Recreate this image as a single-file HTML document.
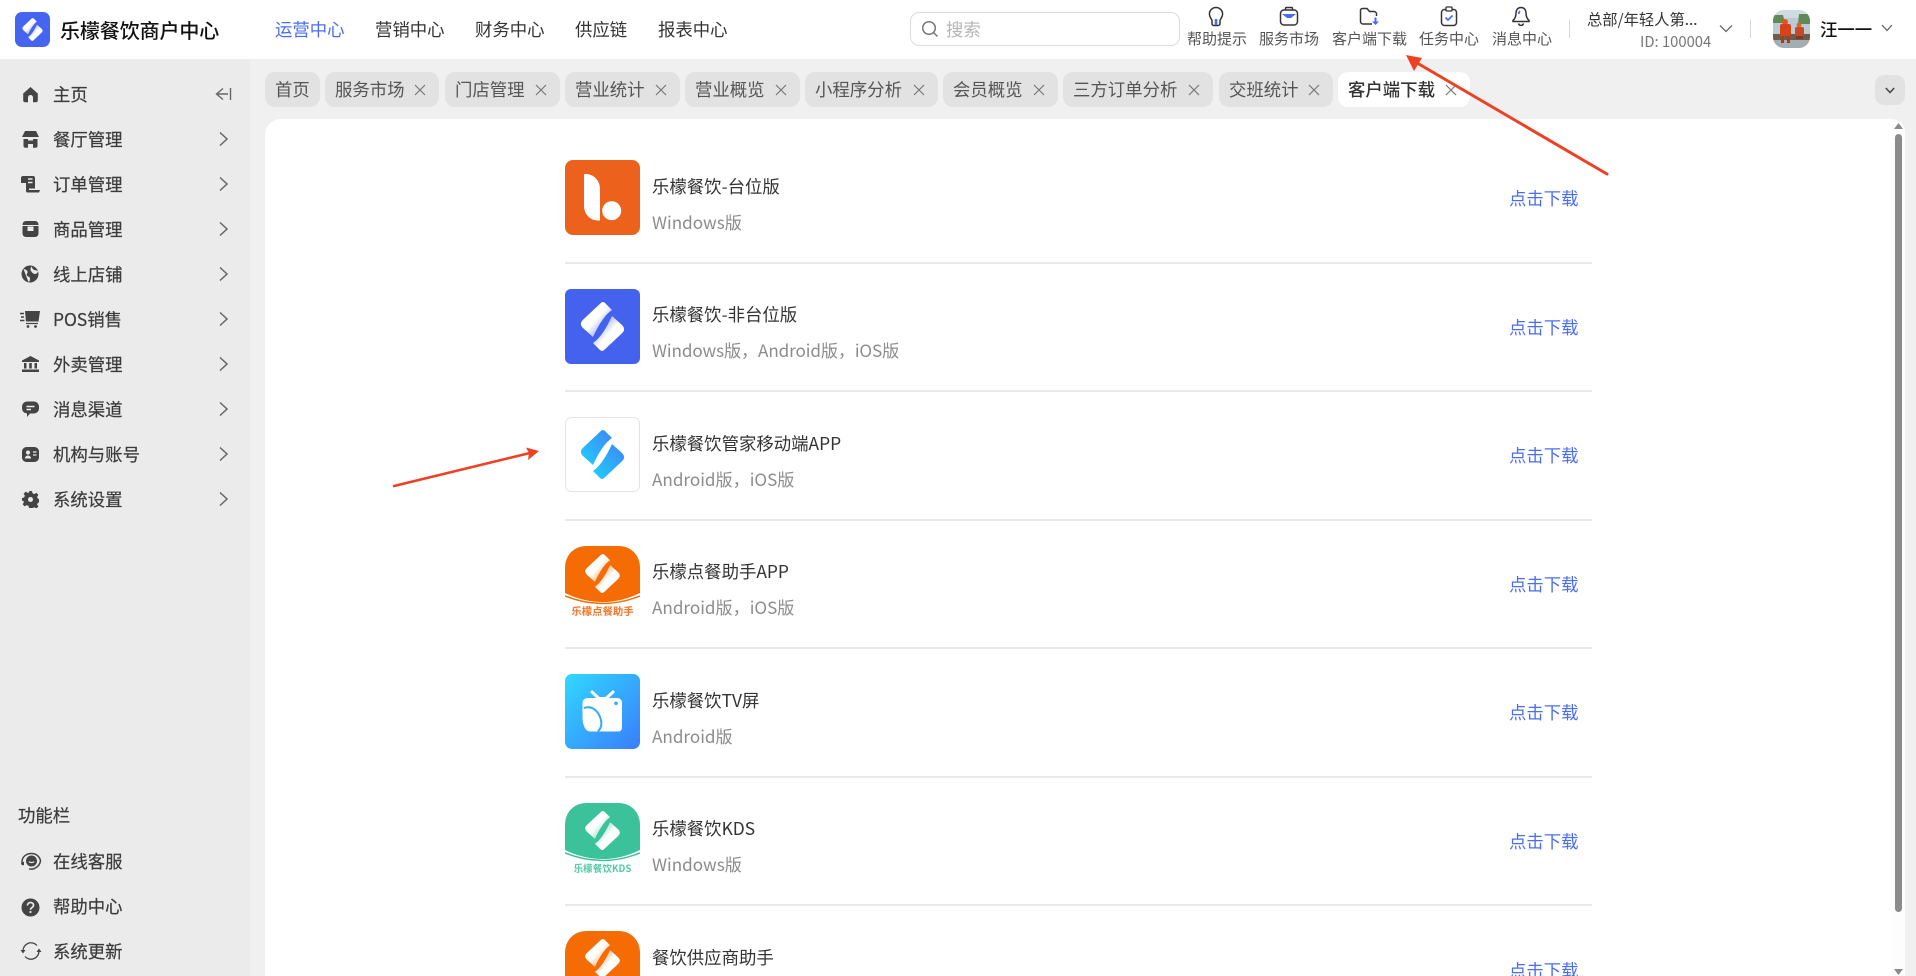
<!DOCTYPE html>
<html lang="zh-CN"><head><meta charset="utf-8"><title>乐檬餐饮商户中心</title>
<style>
html,body{margin:0;padding:0;width:1916px;height:976px;overflow:hidden;background:#f0f0f1}
body{position:relative;font-family:"Noto Sans CJK SC","Liberation Sans",sans-serif;color:#333;font-size:17.4px}
.t{position:absolute;white-space:nowrap;line-height:24px}
.a{position:absolute;display:block}
#hd{position:absolute;left:0;top:0;width:1916px;height:59px;background:#fff}
#sb{position:absolute;left:0;top:59px;width:250px;height:917px;background:#ebebeb}
#pn{position:absolute;left:265px;top:119px;width:1640px;height:900px;background:#fff;border-radius:16px 16px 0 0}
.nav{color:#333}
.tl{color:#555;font-size:15px;text-align:center}
.tab{position:absolute;top:72px;height:35px;background:#e2e2e2;border-radius:10px;line-height:35px;color:#555;padding-left:10px;box-sizing:border-box;white-space:nowrap}
.tab i{position:absolute;top:12px;right:13px;width:12px;height:12px;line-height:0;display:block}
.tab i svg{display:block}
.m{color:#3b3b3b;-webkit-text-stroke:.2px #3b3b3b}
.ti{color:#333}
.su{color:#8c8c8c;font-size:17.1px}
.dl{color:#4b6ef0}
.ln{position:absolute;left:565px;width:1027px;height:2px;background:#e9e9e9}
.cv{position:absolute;left:219px;width:9px;height:16px}
</style></head><body>
<svg width="0" height="0" style="position:absolute"><defs>
<linearGradient id="w1" x1="0.25" y1="0.25" x2="0.85" y2="0.85"><stop offset="0.4" stop-color="#fff"/><stop offset="1" stop-color="#fff" stop-opacity=".3"/></linearGradient>
<linearGradient id="w2" x1="0.75" y1="0.75" x2="0.15" y2="0.15"><stop offset="0.4" stop-color="#fff"/><stop offset="1" stop-color="#fff" stop-opacity=".3"/></linearGradient>
<linearGradient id="b1" x1="0" y1="1" x2="1" y2="0"><stop offset="0" stop-color="#1fd0ff"/><stop offset="1" stop-color="#3d86f5"/></linearGradient>
<linearGradient id="tv" x1="0" y1="0" x2="1" y2="1"><stop offset="0" stop-color="#30d8ff"/><stop offset="1" stop-color="#3a7dfb"/></linearGradient>
<symbol id="lg" viewBox="0 0 75 75" overflow="visible"><path fill="url(#w1)" d="M35.600 14.200Q37.700 12 40 14L47 21C41 25 35 33 28 48L18 39C15.200 36 15.200 33.500 18 30.700Z"/><path fill="url(#w2)" d="M39.400 60.800Q37.300 63 35 61L28 54C34 50 40 42 47 27L57 36C59.800 39 59.800 41.500 57 44.300Z"/></symbol>
<symbol id="lb" viewBox="0 0 75 75"><path fill="url(#b1)" d="M35.600 14.200Q37.700 12 40 14L47 21C41 25 35 33 28 48L18 39C15.200 36 15.200 33.500 18 30.700Z"/><path fill="url(#b1)" d="M39.400 60.800Q37.300 63 35 61L28 54C34 50 40 42 47 27L57 36C59.800 39 59.800 41.500 57 44.300Z"/></symbol>
<symbol id="cv" viewBox="0 0 9 16"><path d="M1 1.500L8 8 1 14.500" fill="none" stroke="#666" stroke-width="1.500"/></symbol>
<symbol id="x" viewBox="0 0 12 12"><path d="M1 1L11 11M11 1L1 11" fill="none" stroke="#777" stroke-width="1.200"/></symbol>
</defs></svg>

<div id="hd"></div>
<svg class="a" style="left:15px;top:12px" width="35" height="35"><rect width="35" height="35" rx="7" fill="#4565f0"/><use href="#lg" width="35" height="35"/></svg>
<div class="t" style="left:60px;top:18px;font-size:20px;font-weight:500;color:#111;letter-spacing:-.1px">乐檬餐饮商户中心</div>
<div class="t" style="left:275px;top:18px;color:#4a6cf0">运营中心</div>
<div class="t nav" style="left:375px;top:18px">营销中心</div>
<div class="t nav" style="left:475px;top:18px">财务中心</div>
<div class="t nav" style="left:575px;top:18px">供应链</div>
<div class="t nav" style="left:658px;top:18px">报表中心</div>

<div class="a" style="left:910px;top:12px;width:270px;height:34px;border:1px solid #dcdcdc;border-radius:9px;box-sizing:border-box"></div>
<svg class="a" style="left:921px;top:20px" width="18" height="18" viewBox="0 0 18 18"><circle cx="8" cy="8" r="6.300" fill="none" stroke="#777" stroke-width="1.500"/><path d="M12.500 12.500L16.500 16.500" stroke="#777" stroke-width="1.500"/></svg>
<div class="t" style="left:946px;top:18px;color:#b5b5b5">搜索</div>

<!-- top icons -->
<svg class="a" style="left:1206px;top:6px" width="20" height="22" viewBox="0 0 20 22"><path d="M10 1.500a6.600 6.600 0 0 0-6.600 6.600c0 3 2 4.300 2.600 6.400v3.200c0 1 .8 1.800 1.800 1.800h4.400c1 0 1.800-.8 1.800-1.800v-3.200c.6-2.100 2.600-3.400 2.600-6.400A6.600 6.600 0 0 0 10 1.500z" fill="none" stroke="#333" stroke-width="1.500"/><path d="M8.700 13h2.600v6H8.700z" fill="#4a6cf0"/></svg>
<svg class="a" style="left:1279px;top:6px" width="20" height="20" viewBox="0 0 20 20"><rect x="1.500" y="4" width="17" height="15" rx="3.500" fill="none" stroke="#333" stroke-width="1.500"/><path d="M6.500 4V2.500c0-.6.4-1 1-1h5c.6 0 1 .4 1 1V4" fill="none" stroke="#333" stroke-width="1.500"/><path d="M3 8h14l-5 4H8z" fill="#4a6cf0"/></svg>
<svg class="a" style="left:1359px;top:7px" width="22" height="19" viewBox="0 0 22 19"><path d="M13 17H4a2.500 2.500 0 0 1-2.500-2.500v-11A2 2 0 0 1 3.500 1.500H8l2.500 3H15a2.500 2.500 0 0 1 2.500 2.500V9" fill="none" stroke="#333" stroke-width="1.500"/><path d="M15.500 10.500h2v4h2.500l-3.500 3.500-3.500-3.500h2.500z" fill="#4a6cf0"/></svg>
<svg class="a" style="left:1440px;top:6px" width="18" height="21" viewBox="0 0 18 21"><rect x="1.500" y="3.500" width="15" height="16" rx="3" fill="none" stroke="#333" stroke-width="1.500"/><rect x="6" y="1" width="6" height="4" rx="1" fill="#fff" stroke="#333" stroke-width="1.300"/><path d="M5.500 11.500l2.500 2.500 4.500-4.500" fill="none" stroke="#4a6cf0" stroke-width="1.700"/></svg>
<svg class="a" style="left:1511px;top:6px" width="20" height="21" viewBox="0 0 20 21"><path d="M10 1.500c-3.300 0-5 2.600-5 5.500 0 3.700-1 5.800-3 7.500v1h16v-1c-2-1.700-3-3.800-3-7.500 0-2.900-1.700-5.500-5-5.500z" fill="none" stroke="#333" stroke-width="1.500"/><path d="M7.500 17.500a2.600 2.600 0 0 0 5 0" fill="none" stroke="#333" stroke-width="1.500"/><path d="M9 5c-.8.700-1.200 1.700-1.200 3" fill="none" stroke="#4a6cf0" stroke-width="1.700"/></svg>
<div class="t tl" style="left:1187px;top:27px">帮助提示</div>
<div class="t tl" style="left:1259px;top:27px">服务市场</div>
<div class="t tl" style="left:1332px;top:27px">客户端下载</div>
<div class="t tl" style="left:1419px;top:27px">任务中心</div>
<div class="t tl" style="left:1492px;top:27px">消息中心</div>

<div class="a" style="left:1569px;top:20px;width:1px;height:18px;background:#d8d8d8"></div>
<div class="t" style="left:1587px;top:7px;font-size:15.300px;color:#333">总部/年轻人第...</div>
<div class="t" style="left:1640px;top:30px;font-size:14.800px;color:#777">ID: 100004</div>
<svg class="a" style="left:1719px;top:24px" width="14" height="9" viewBox="0 0 14 9"><path d="M1 1.500L7 7.500 13 1.500" fill="none" stroke="#666" stroke-width="1.300"/></svg>
<div class="a" style="left:1750px;top:20px;width:1px;height:18px;background:#d8d8d8"></div>
<svg class="a" style="left:1773px;top:10px" width="37" height="38" viewBox="0 0 37 38">
<defs><clipPath id="av"><rect width="37" height="38" rx="11"/></clipPath></defs>
<g clip-path="url(#av)"><rect width="37" height="38" fill="#b9ccd6"/><rect y="0" width="37" height="8" fill="#cfdbe2"/><path d="M0 5h10l2 8H0zM26 4h11v10H25z" fill="#5f8a55"/><rect x="0" y="24" width="37" height="6" fill="#6c5d48"/><rect x="0" y="30" width="37" height="8" fill="#a2adb4"/>
<circle cx="12" cy="12" r="3" fill="#e2531d"/><rect x="7" y="14" width="11" height="12" rx="2" fill="#d8421a"/><rect x="8" y="26" width="3" height="7" fill="#b93315"/><rect x="14" y="26" width="3" height="7" fill="#b93315"/>
<circle cx="26" cy="15" r="2.500" fill="#d56a2e"/><rect x="22" y="17" width="9" height="9" rx="2" fill="#c9482a"/><rect x="23" y="26" width="7" height="3" fill="#7d3a2a"/></g></svg>
<div class="t" style="left:1820px;top:18px;font-weight:500;color:#111;font-size:17.400px">汪一一</div>
<svg class="a" style="left:1881px;top:24px" width="12" height="8" viewBox="0 0 12 8"><path d="M1 1l5 5.500L11 1" fill="none" stroke="#666" stroke-width="1.300"/></svg>

<!-- sidebar -->
<div id="sb"></div>
<svg class="a" style="left:22px;top:86px" width="17" height="17" viewBox="0 0 17 17"><path d="M8.500 1L15.800 7.500V14.500c0 1-.8 1.800-1.800 1.800H11V11.500a2.500 2.500 0 0 0-5 0v4.800H3c-1 0-1.800-.8-1.800-1.800V7.500z" fill="#444"/></svg>
<div class="t m" style="left:53px;top:83px">主页</div>
<svg class="a" style="left:215px;top:87px" width="17" height="14" viewBox="0 0 17 14"><path d="M8 1.500L1.500 7 8 12.500M1.500 7H13M15.500 1v12" fill="none" stroke="#666" stroke-width="1.400"/></svg>

<svg class="a" style="left:22px;top:131px" width="17" height="17" viewBox="0 0 17 17"><path d="M3 0h11l3 6H0z" fill="#444"/><path d="M1.500 8h14v7c0 1-.8 1.800-1.800 1.800H3.300c-1 0-1.800-.8-1.800-1.800z" fill="#444"/><path d="M6 6.500v3h5v-3M6 13h5v4H6z" fill="#ebebeb"/></svg>
<div class="t m" style="left:53px;top:128px">餐厅管理</div>
<svg class="a" style="left:20px;top:176px" width="20" height="17" viewBox="0 0 20 17"><path d="M3 0h10c1.200 0 2 .8 2 2v10.500H9V15c0 1-.8 1.500-1.500 1.500S6 16 6 15V7H1V2c0-1.200.8-2 2-2z" fill="#444"/><path d="M8 3h4.500M8 6.500h4.500" stroke="#ebebeb" stroke-width="1.500"/><path d="M9 14h11l-1 2.500H8z" fill="#444"/></svg>
<div class="t m" style="left:53px;top:173px">订单管理</div>
<svg class="a" style="left:22px;top:221px" width="17" height="16" viewBox="0 0 17 16"><rect x="0.500" y="0" width="16" height="16" rx="3.500" fill="#444"/><rect x="5.500" y="5.500" width="6" height="4.500" fill="#ebebeb"/><path d="M0 4.500h17" stroke="#ebebeb" stroke-width="1"/></svg>
<div class="t m" style="left:53px;top:218px">商品管理</div>
<svg class="a" style="left:21px;top:265px" width="18" height="18" viewBox="0 0 18 18"><circle cx="9" cy="9" r="8.500" fill="#444"/><path d="M2.500 4c2 .5 3.500 1 4 2.500S5 9 6 10.500s3 1 3 3-.5 3-1.500 3.500M11 1.500c0 2 1 3 2.500 3.500s3 .5 3.500 1c0 1.500-1.500 3-3 3S11 7.500 10 6 9.500 2.500 11 1.500z" fill="#ebebeb"/></svg>
<div class="t m" style="left:53px;top:263px">线上店铺</div>
<svg class="a" style="left:20px;top:310px" width="20" height="18" viewBox="0 0 20 18"><path d="M5 1h15l-1.500 10.500H6z" fill="#444"/><path d="M0 3.500h4M1 7h3M0 10.500h4.500" stroke="#444" stroke-width="1.500"/><path d="M6 13.500h12" stroke="#444" stroke-width="1.200"/><circle cx="8" cy="16.500" r="1.400" fill="#444"/><circle cx="15.500" cy="16.500" r="1.400" fill="#444"/></svg>
<div class="t m" style="left:53px;top:308px">POS销售</div>
<svg class="a" style="left:22px;top:356px" width="17" height="16" viewBox="0 0 17 16"><path d="M8.500 0L17 4.500V6H0V4.500z" fill="#444"/><path d="M2 7h2.500v5.500H2zM7.200 7h2.600v5.500H7.200zM12.500 7H15v5.500h-2.500z" fill="#444"/><rect x="0" y="13.500" width="17" height="2.500" fill="#444"/></svg>
<div class="t m" style="left:53px;top:353px">外卖管理</div>
<svg class="a" style="left:22px;top:401px" width="17" height="17" viewBox="0 0 17 17"><path d="M5 0.500h7a5 5 0 0 1 5 5v2a5 5 0 0 1-5 5H8L5 16v-3.600a5 5 0 0 1-5-4.900v-2a5 5 0 0 1 5-5z" fill="#444"/><path d="M4.500 5.500h8M4.500 8.500h4.500" stroke="#ebebeb" stroke-width="1.400"/></svg>
<div class="t m" style="left:53px;top:398px">消息渠道</div>
<svg class="a" style="left:22px;top:447px" width="17" height="15" viewBox="0 0 17 15"><rect width="17" height="15" rx="4.500" fill="#444"/><circle cx="6" cy="5.500" r="2" fill="#ebebeb"/><path d="M2.800 11.500c.4-2 1.700-3 3.200-3s2.800 1 3.200 3z" fill="#ebebeb"/><path d="M11 5h3.500M11 8h3.500" stroke="#ebebeb" stroke-width="1.300"/></svg>
<div class="t m" style="left:53px;top:443px">机构与账号</div>
<svg class="a" style="left:22px;top:491px" width="17" height="17" viewBox="0 0 17 17"><path d="M7 0h3l.5 2.300 1.800.8 2-1.300 2.100 2.100-1.300 2 .8 1.800 2.100.5v3l-2.100.5-.8 1.800 1.300 2-2.100 2.100-2-1.300-1.800.8L10 17H7l-.5-2.100-1.800-.8-2 1.300-2.100-2.100 1.300-2-.8-1.800L0 10V7l2.100-.5.800-1.800-1.300-2L3.700.6l2 1.300 1.800-.8z" fill="#444"/><circle cx="8.500" cy="8.500" r="2.500" fill="#ebebeb"/></svg>
<div class="t m" style="left:53px;top:488px">系统设置</div>

<svg class="cv" style="top:131px"><use href="#cv"/></svg>
<svg class="cv" style="top:176px"><use href="#cv"/></svg>
<svg class="cv" style="top:221px"><use href="#cv"/></svg>
<svg class="cv" style="top:266px"><use href="#cv"/></svg>
<svg class="cv" style="top:311px"><use href="#cv"/></svg>
<svg class="cv" style="top:356px"><use href="#cv"/></svg>
<svg class="cv" style="top:401px"><use href="#cv"/></svg>
<svg class="cv" style="top:446px"><use href="#cv"/></svg>
<svg class="cv" style="top:491px"><use href="#cv"/></svg>

<div class="t m" style="left:18px;top:804px">功能栏</div>
<svg class="a" style="left:20px;top:851px" width="22" height="22" viewBox="0 0 22 22"><circle cx="11.500" cy="10" r="5.500" fill="#444"/><path d="M9 10.500c.7 1.300 4.300 1.300 5 0" stroke="#ebebeb" stroke-width="1.200" fill="none"/><path d="M2 11c0-5 4-8.500 9.500-8.500s8.500 4 9 7.500c-.5 3.500-3 6-6 7.500-2 .8-4 .8-5.500.3" fill="none" stroke="#444" stroke-width="1.500"/><path d="M1 12a2 2 0 0 1 3-1v3a2 2 0 0 1-3-2z" fill="#444"/></svg>
<div class="t m" style="left:53px;top:850px">在线客服</div>
<svg class="a" style="left:21px;top:898px" width="19" height="19" viewBox="0 0 19 19"><circle cx="9.500" cy="9.500" r="9" fill="#444"/><path d="M6.500 7.500c0-1.800 1.300-3 3-3s3 1 3 2.700c0 2.300-3 2.300-3 4.500" fill="none" stroke="#ebebeb" stroke-width="1.700"/><circle cx="9.500" cy="14" r="1.100" fill="#ebebeb"/></svg>
<div class="t m" style="left:53px;top:895px">帮助中心</div>
<svg class="a" style="left:20px;top:941px" width="22" height="20" viewBox="0 0 22 20"><path d="M3 10a8 8 0 0 1 14-5.500M19 10a8 8 0 0 1-14 5.500" fill="none" stroke="#444" stroke-width="1.300"/><path d="M0.500 9h5L3 12.500zM21.500 11h-5L19 7.500z" fill="#444"/></svg>
<div class="t m" style="left:53px;top:940px">系统更新</div>

<!-- tabs -->
<div class="tab" style="left:265px;width:55px">首页</div>
<div class="tab" style="left:325px;width:114px">服务市场<i><svg width="12" height="12"><use href="#x"/></svg></i></div>
<div class="tab" style="left:445px;width:115px">门店管理<i><svg width="12" height="12"><use href="#x"/></svg></i></div>
<div class="tab" style="left:565px;width:115px">营业统计<i><svg width="12" height="12"><use href="#x"/></svg></i></div>
<div class="tab" style="left:685px;width:115px">营业概览<i><svg width="12" height="12"><use href="#x"/></svg></i></div>
<div class="tab" style="left:805px;width:133px">小程序分析<i><svg width="12" height="12"><use href="#x"/></svg></i></div>
<div class="tab" style="left:943px;width:115px">会员概览<i><svg width="12" height="12"><use href="#x"/></svg></i></div>
<div class="tab" style="left:1063px;width:150px">三方订单分析<i><svg width="12" height="12"><use href="#x"/></svg></i></div>
<div class="tab" style="left:1219px;width:114px">交班统计<i><svg width="12" height="12"><use href="#x"/></svg></i></div>
<div class="tab" style="left:1338px;width:132px;background:#fff;color:#333;font-weight:500">客户端下载<i><svg width="12" height="12"><use href="#x"/></svg></i></div>
<div class="a" style="left:1875px;top:75px;width:30px;height:30px;background:#e2e2e2;border-radius:9px"></div>
<svg class="a" style="left:1885px;top:87px" width="10" height="7" viewBox="0 0 10 7"><path d="M.800 1L5 5.500 9.200 1" fill="none" stroke="#444" stroke-width="1.500"/></svg>

<!-- panel -->
<div id="pn"></div>
<div class="a" style="left:1892px;top:119px;width:13px;height:857px;background:#fdfdfd;border-radius:0 16px 0 0"></div>
<div class="a" style="left:1895px;top:134px;width:7px;height:778px;background:#8b8b8b;border-radius:4px"></div>
<svg class="a" style="left:1894px;top:123px" width="9" height="6"><path d="M4.500 0L9 6H0z" fill="#8b8b8b"/></svg>
<svg class="a" style="left:1894px;top:969px" width="9" height="6"><path d="M0 0h9L4.500 6z" fill="#8b8b8b"/></svg>

<!-- row 1 -->
<svg class="a" style="left:565px;top:160px" width="75" height="75"><rect width="75" height="75" rx="8" fill="#ec611c"/><path d="M19 14H21C29 14 35 21 35 29V60.500H33C25 60.500 19 54 19 46Z" fill="#fff"/><circle cx="46.700" cy="50.700" r="9.500" fill="#fff"/></svg>
<div class="t ti" style="left:652px;top:175px">乐檬餐饮-台位版</div>
<div class="t su" style="left:652px;top:210px">Windows版</div>
<div class="t dl" style="left:1509px;top:187px">点击下载</div>
<div class="ln" style="top:262px"></div>
<!-- row 2 -->
<svg class="a" style="left:565px;top:289px" width="75" height="75"><rect width="75" height="75" rx="6" fill="#4562ef"/><use href="#lg" width="75" height="75"/></svg>
<div class="t ti" style="left:652px;top:303px">乐檬餐饮-非台位版</div>
<div class="t su" style="left:652px;top:338px;letter-spacing:-.1px">Windows版，Android版，iOS版</div>
<div class="t dl" style="left:1509px;top:316px">点击下载</div>
<div class="ln" style="top:390px"></div>
<!-- row 3 -->
<svg class="a" style="left:565px;top:417px" width="75" height="75"><rect x=".500" y=".500" width="74" height="74" rx="6" fill="#fff" stroke="#e4e4e4"/><use href="#lb" width="75" height="75"/></svg>
<div class="t ti" style="left:652px;top:432px">乐檬餐饮管家移动端APP</div>
<div class="t su" style="left:652px;top:467px">Android版，iOS版</div>
<div class="t dl" style="left:1509px;top:444px">点击下载</div>
<div class="ln" style="top:519px"></div>
<!-- row 4 -->
<svg class="a" style="left:565px;top:546px" width="75" height="75"><path d="M22 0H53C66 0 75 9 75 22V47C50 59 25 59 0 47V22C0 9 9 0 22 0Z" fill="#f46c03"/><path d="M0 50C25 60 50 60 75 50" fill="none" stroke="#f46c03" stroke-width="1.500"/><use href="#lg" x="7.500" y="-2.500" width="60" height="60"/><text x="37.500" y="69" font-size="10.400" font-weight="700" text-anchor="middle" fill="#f0772a">乐檬点餐助手</text></svg>
<div class="t ti" style="left:652px;top:560px">乐檬点餐助手APP</div>
<div class="t su" style="left:652px;top:595px">Android版，iOS版</div>
<div class="t dl" style="left:1509px;top:573px">点击下载</div>
<div class="ln" style="top:647px"></div>
<!-- row 5 -->
<svg class="a" style="left:565px;top:674px" width="75" height="75"><rect width="75" height="75" rx="7" fill="url(#tv)"/><path d="M27 18l7 6.500h7l7-6.500" fill="none" stroke="#fff" stroke-width="3" stroke-linecap="round"/><path d="M23 24H52C55 24 57 26 57 29V53.500C57 56 55.500 57.500 53 57.500H25C20 57.500 17.500 50 17.500 43V29C17.500 26 20 24 23 24Z" fill="#fff"/><path d="M19 34C28 31 34 38 36 46C37 51 36 54 33 57.500" fill="none" stroke="#35a9fd" stroke-width="2"/><circle cx="51" cy="29.300" r="1.800" fill="#35a9fd"/></svg>
<div class="t ti" style="left:652px;top:689px">乐檬餐饮TV屏</div>
<div class="t su" style="left:652px;top:724px">Android版</div>
<div class="t dl" style="left:1509px;top:701px">点击下载</div>
<div class="ln" style="top:776px"></div>
<!-- row 6 -->
<svg class="a" style="left:565px;top:803px" width="75" height="75"><path d="M22 0H53C66 0 75 9 75 22V47C50 59 25 59 0 47V22C0 9 9 0 22 0Z" fill="#3bc29a"/><path d="M0 50C25 60 50 60 75 50" fill="none" stroke="#3bc29a" stroke-width="1.500"/><use href="#lg" x="7.500" y="-2.500" width="60" height="60"/><text x="37.500" y="69" font-size="9.600" font-weight="700" text-anchor="middle" fill="#55c9a6">乐檬餐饮KDS</text></svg>
<div class="t ti" style="left:652px;top:817px">乐檬餐饮KDS</div>
<div class="t su" style="left:652px;top:852px">Windows版</div>
<div class="t dl" style="left:1509px;top:830px">点击下载</div>
<div class="ln" style="top:904px"></div>
<!-- row 7 -->
<svg class="a" style="left:565px;top:931px" width="75" height="45"><path d="M22 0H53C66 0 75 9 75 22V60H0V22C0 9 9 0 22 0Z" fill="#f46c03"/><use href="#lg" x="7.500" y="-2.500" width="60" height="60"/></svg>
<div class="t ti" style="left:652px;top:946px">餐饮供应商助手</div>
<div class="t dl" style="left:1509px;top:959px">点击下载</div>

<!-- annotation arrows -->
<svg class="a" style="left:0;top:0;pointer-events:none" width="1916" height="976">
<path d="M1607 174L1412 60" stroke="#ee4023" stroke-width="3" stroke-linecap="round" fill="none"/><path d="M1406 55L1422 58 1414 71z" fill="#ee4023"/>
<path d="M394 486L530 453" stroke="#ee4023" stroke-width="2.600" stroke-linecap="round" fill="none"/><path d="M539 451L526 447.500 529 453 528 460z" fill="#ee4023"/>
</svg>
</body></html>
